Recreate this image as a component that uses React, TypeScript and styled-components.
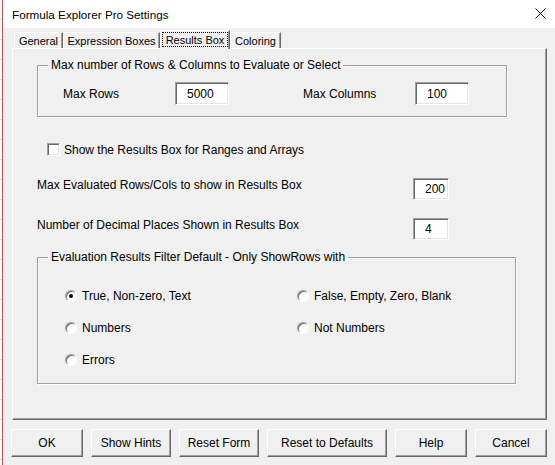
import React, { useState } from 'react'
import styled, { createGlobalStyle, css } from 'styled-components'

const GlobalStyle = createGlobalStyle`
  html, body {
    margin: 0;
    padding: 0;
    background: #f0f0f0;
  }
  body {
    font-family: 'Liberation Sans', Arial, sans-serif;
    font-size: 12px;
    color: #000;
  }
  * {
    box-sizing: border-box;
  }
`

const raised = css`
  border: 1px solid;
  border-color: #fff #696969 #696969 #fff;
  box-shadow: inset -1px -1px 0 #a0a0a0;
`

const sunken = css`
  border: 1px solid;
  border-color: #a0a0a0 #fff #fff #a0a0a0;
  box-shadow: inset 1px 1px 0 #696969, inset -1px -1px 0 #e3e3e3;
`

const Screen = styled.div`
  display: flex;
  width: 555px;
  height: 465px;
  overflow: hidden;
`

const ExcelEdge = styled.div`
  width: 3px;
  flex-shrink: 0;
  background: repeating-linear-gradient(
    to bottom,
    #fff 0 19px,
    #d4d4d4 19px 20px
  );
  border-right: 1px solid #d24b4b;
`

const Window = styled.div`
  flex: 1;
  display: flex;
  flex-direction: column;
  background: #f0f0f0;
`

const TitleBar = styled.div`
  height: 28px;
  flex-shrink: 0;
  display: flex;
  align-items: center;
  justify-content: space-between;
  padding: 0 9px 0 9px;
  background: #fff;
`

const Title = styled.span`
  font-size: 11.7px;
  padding-top: 1px;
`

const CloseIcon = styled.svg`
  width: 11px;
  height: 11px;
  margin-bottom: 2px;
`

const Body = styled.div`
  display: flex;
  flex-direction: column;
  padding: 0 8px;
`

const TabStrip = styled.div`
  height: 20px;
  display: flex;
  align-items: flex-end;
  padding-left: 3px;
`

const Tab = styled.div<{ $w: number; $active?: boolean }>`
  position: relative;
  width: ${(p) => p.$w}px;
  height: ${(p) => (p.$active ? 19 : 16)}px;
  display: flex;
  align-items: center;
  justify-content: center;
  white-space: nowrap;
  font-size: 11px;
  border: 1px solid;
  border-bottom: none;
  border-color: #fff #696969 transparent #fff;
  box-shadow: inset -1px 0 0 #a0a0a0;
  background: #f0f0f0;
  ${(p) =>
    p.$active &&
    css`
      margin-bottom: -1px;
      z-index: 1;
      padding: 1px 1px 2px;
    `}
`

const FocusRing = styled.span`
  display: flex;
  align-items: center;
  justify-content: center;
  width: 100%;
  height: 100%;
  outline: 1px dotted #000;
  outline-offset: -1px;
`

const Panel = styled.div`
  height: 372px;
  margin-left: 1px;
  display: flex;
  flex-direction: column;
  padding-left: 24px;
  border: 1px solid;
  border-color: #fff #696969 #696969 #fff;
  box-shadow: inset -1px -1px 0 #a0a0a0;
`

const Frame = styled.div<{ $w: number; $h: number; $mt: number }>`
  position: relative;
  width: ${(p) => p.$w}px;
  height: ${(p) => p.$h}px;
  margin-top: ${(p) => p.$mt}px;
  border: 1px solid #a0a0a0;
  box-shadow: 1px 1px 0 #fff, inset 1px 1px 0 #fff;
`

const FrameTitle = styled.span`
  position: absolute;
  top: -8px;
  left: 10px;
  padding: 0 3px;
  background: #f0f0f0;
  line-height: 14px;
  white-space: nowrap;
`

const LimitsGrid = styled.div`
  display: grid;
  grid-template-columns: 112px 54px 74px 112px 54px;
  align-items: center;
  padding: 16px 0 0 25px;
`

const TextBox = styled.div<{ $w: number; $h: number }>`
  width: ${(p) => p.$w}px;
  height: ${(p) => p.$h}px;
  display: flex;
  align-items: center;
  padding-left: 11px;
  background: #fff;
  ${sunken}
`

const CheckRow = styled.label`
  display: flex;
  align-items: center;
  gap: 4px;
  height: 13px;
  margin: 26px 0 0 10px;
`

const CheckBox = styled.span`
  width: 13px;
  height: 13px;
  background: #fff;
  ${sunken}
`

const FieldRow = styled.div<{ $mt: number }>`
  display: flex;
  justify-content: space-between;
  align-items: flex-start;
  width: 412px;
  margin-top: ${(p) => p.$mt}px;
`

const FieldLabel = styled.span`
  line-height: 14px;
`

const RadioGrid = styled.div`
  display: grid;
  grid-template-columns: 232px 1fr;
  grid-auto-rows: 20px;
  row-gap: 12px;
  padding: 28px 0 0 27px;
`

const RadioRow = styled.label`
  display: flex;
  align-items: center;
  gap: 5px;
`

const RadioDot = styled.span<{ $checked?: boolean }>`
  width: 12px;
  height: 12px;
  flex-shrink: 0;
  border-radius: 50%;
  border: 1px solid;
  border-color: #a0a0a0 #fff #fff #a0a0a0;
  box-shadow: inset 1px 1px 0 #696969;
  background: #fff;
  display: flex;
  align-items: center;
  justify-content: center;
  &::after {
    content: '';
    width: 4px;
    height: 4px;
    border-radius: 50%;
    background: ${(p) => (p.$checked ? '#000' : 'transparent')};
  }
`

const ButtonBar = styled.div`
  display: flex;
  gap: 8px;
  margin-top: 9px;
`

const Button = styled.button<{ $w: number }>`
  width: ${(p) => p.$w}px;
  height: 28px;
  padding: 0;
  font: inherit;
  color: #000;
  background: #f0f0f0;
  ${raised}
`

const tabs = [
  { label: 'General', width: 49 },
  { label: 'Expression Boxes', width: 97 },
  { label: 'Results Box', width: 70 },
  { label: 'Coloring', width: 51 },
]

const radios = [
  'True, Non-zero, Text',
  'False, Empty, Zero, Blank',
  'Numbers',
  'Not Numbers',
  'Errors',
]

const buttons = [
  { label: 'OK', width: 72 },
  { label: 'Show Hints', width: 80 },
  { label: 'Reset Form', width: 80 },
  { label: 'Reset to Defaults', width: 120 },
  { label: 'Help', width: 72 },
  { label: 'Cancel', width: 72 },
]

export default function App() {
  const [activeTab] = useState('Results Box')
  const [filter, setFilter] = useState(radios[0])

  return (
    <>
      <GlobalStyle />
      <Screen>
        <ExcelEdge />
        <Window>
          <TitleBar>
            <Title>Formula Explorer Pro Settings</Title>
            <CloseIcon viewBox="0 0 11 11">
              <path d="M0.5 0.5 L10.5 10.5 M10.5 0.5 L0.5 10.5" stroke="#000" strokeWidth="1" />
            </CloseIcon>
          </TitleBar>
          <Body>
            <TabStrip>
              {tabs.map((t) =>
                t.label === activeTab ? (
                  <Tab key={t.label} $w={t.width} $active>
                    <FocusRing>{t.label}</FocusRing>
                  </Tab>
                ) : (
                  <Tab key={t.label} $w={t.width}>
                    {t.label}
                  </Tab>
                ),
              )}
            </TabStrip>
            <Panel>
              <Frame $w={470} $h={52} $mt={16}>
                <FrameTitle>Max number of Rows &amp; Columns to Evaluate or Select</FrameTitle>
                <LimitsGrid>
                  <span>Max Rows</span>
                  <TextBox $w={54} $h={23}>5000</TextBox>
                  <span />
                  <span>Max Columns</span>
                  <TextBox $w={54} $h={23}>100</TextBox>
                </LimitsGrid>
              </Frame>

              <CheckRow>
                <CheckBox />
                Show the Results Box for Ranges and Arrays
              </CheckRow>

              <FieldRow $mt={22}>
                <FieldLabel>Max Evaluated Rows/Cols to show in Results Box</FieldLabel>
                <TextBox $w={36} $h={22}>200</TextBox>
              </FieldRow>
              <FieldRow $mt={18}>
                <FieldLabel>Number of Decimal Places Shown in Results Box</FieldLabel>
                <TextBox $w={36} $h={22}>4</TextBox>
              </FieldRow>

              <Frame $w={479} $h={127} $mt={17}>
                <FrameTitle>Evaluation Results Filter Default - Only ShowRows with</FrameTitle>
                <RadioGrid>
                  {radios.map((r) => (
                    <RadioRow key={r} onClick={() => setFilter(r)}>
                      <RadioDot $checked={filter === r} />
                      {r}
                    </RadioRow>
                  ))}
                </RadioGrid>
              </Frame>
            </Panel>
            <ButtonBar>
              {buttons.map((b) => (
                <Button key={b.label} $w={b.width}>
                  {b.label}
                </Button>
              ))}
            </ButtonBar>
          </Body>
        </Window>
      </Screen>
    </>
  )
}
